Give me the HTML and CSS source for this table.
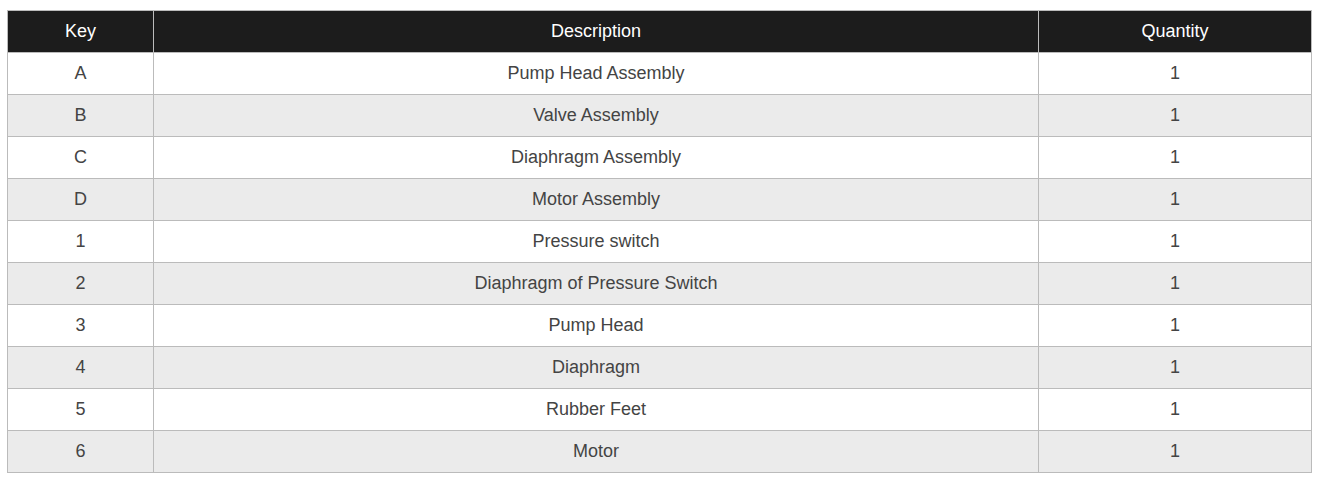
FILE: index.html
```html
<!DOCTYPE html>
<html>
<head>
<meta charset="utf-8">
<link rel="stylesheet" href="styles.css">
</head>
<body>
<div class="wrap">
<table class="parts">
<colgroup><col class="c-key"><col class="c-desc"><col class="c-qty"></colgroup>
<thead>
<tr><th>Key</th><th>Description</th><th>Quantity</th></tr>
</thead>
<tbody>
<tr><td>A</td><td>Pump Head Assembly</td><td>1</td></tr>
<tr><td>B</td><td>Valve Assembly</td><td>1</td></tr>
<tr><td>C</td><td>Diaphragm Assembly</td><td>1</td></tr>
<tr><td>D</td><td>Motor Assembly</td><td>1</td></tr>
<tr><td>1</td><td>Pressure switch</td><td>1</td></tr>
<tr><td>2</td><td>Diaphragm of Pressure Switch</td><td>1</td></tr>
<tr><td>3</td><td>Pump Head</td><td>1</td></tr>
<tr><td>4</td><td>Diaphragm</td><td>1</td></tr>
<tr><td>5</td><td>Rubber Feet</td><td>1</td></tr>
<tr><td>6</td><td>Motor</td><td>1</td></tr>
</tbody>
</table>
</div>
</body>
</html>
```
FILE: styles.css
```css
html, body { margin: 0; padding: 0; background: #fff; }
.wrap { padding: 10px 0 0 7px; }
.parts {
  border-collapse: collapse;
  width: 1304px;
  table-layout: fixed;
  font-family: "Liberation Sans", Arial, sans-serif;
  font-size: 18px;
  color: #444;
}
.c-key { width: 146px; }
.c-desc { width: 885px; }
.c-qty { width: 273px; }
.parts th, .parts td {
  border: 1px solid #bbb;
  height: 41px;
  padding: 0;
  text-align: center;
  vertical-align: middle;
}
.parts th {
  background: #1c1c1c;
  color: #fff;
  font-weight: normal;
}
.parts tbody tr:nth-child(even) td { background: #ebebeb; }
```
